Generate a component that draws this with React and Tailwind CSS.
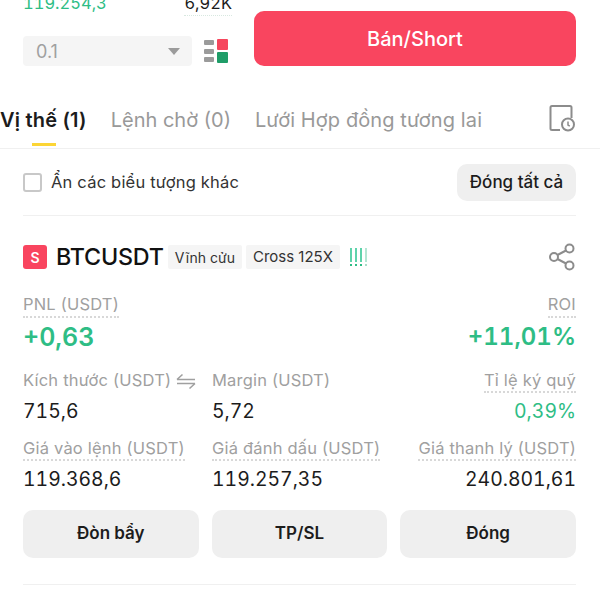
import React from "react";

const Label = ({ children, dotted, className = "" }) => (
  <div
    className={`border-b-2 border-dotted text-[16.5px] leading-[22px] tracking-[0.2px] text-[#a0a0a0] ${
      dotted ? "border-[#d8d8d8]" : "border-transparent"
    } ${className}`}
  >
    {children}
  </div>
);

const Stat = ({ label, value, dotted, right, green, extra, className = "" }) => (
  <div className={`flex flex-col ${right ? "items-end" : "items-start"} ${className}`}>
    <div className="flex items-center gap-[5px]">
      <Label dotted={dotted}>{label}</Label>
      {extra}
    </div>
    <div
      className={`mt-[5px] text-[19.4px] leading-[26px] tabular-nums ${
        green ? "text-[#2ebd85]" : "text-[#1c1c1c]"
      }`}
    >
      {value}
    </div>
  </div>
);

const ActionButton = ({ children }) => (
  <button className="h-[48px] rounded-[10px] bg-[#efefef] text-[17px] font-semibold text-[#1c1c1c]">
    {children}
  </button>
);

const SwapIcon = () => (
  <svg width="20" height="18" viewBox="0 0 20 18" fill="none" stroke="#a0a0a0" strokeWidth="1.6">
    <path d="M1 7.5h18M1 7.5l5.5-5" />
    <path d="M19 11.5H1M19 11.5l-5.5 5" />
  </svg>
);

const OrderBookIcon = () => (
  <div className="ml-[12px] grid w-[24px] grid-cols-[10px_11px] gap-x-[3px]">
    <div className="flex h-[24px] flex-col justify-between py-[1px]">
      <div className="h-[5px] rounded-[1px] bg-[#9b9b9b]"></div>
      <div className="h-[5px] rounded-[1px] bg-[#9b9b9b]"></div>
      <div className="h-[5px] rounded-[1px] bg-[#9b9b9b]"></div>
    </div>
    <div className="flex h-[24px] flex-col justify-between">
      <div className="h-[11px] rounded-[1px] bg-[#f6465d]"></div>
      <div className="h-[11px] rounded-[1px] bg-[#1f9d68]"></div>
    </div>
  </div>
);

const HistoryIcon = () => (
  <svg className="mt-[12px]" width="28" height="28" viewBox="0 0 28 28" fill="none" stroke="#8c8c8c" strokeWidth="2">
    <path d="M12 26H4a1.5 1.5 0 0 1-1.5-1.5V3.5A1.5 1.5 0 0 1 4 2h18a1.5 1.5 0 0 1 1.5 1.5V14" />
    <circle cx="20" cy="20.5" r="6" />
    <path d="M20 17.5v3.5l1.8 1.2" strokeWidth="1.5" />
  </svg>
);

const ShareIcon = () => (
  <svg width="28" height="28" viewBox="0 0 28 28" fill="none" stroke="#8c8c8c" strokeWidth="2">
    <circle cx="6" cy="14" r="4" />
    <circle cx="21.5" cy="5.5" r="4" />
    <circle cx="21.5" cy="22.5" r="4" />
    <path d="M9.5 12l8.5-4.5M9.5 16l8.5 4.5" />
  </svg>
);

const Bang = ({ bar, dot }) => (
  <div className="flex h-[18px] w-[2px] flex-col justify-between">
    <div className={`h-[14px] ${bar}`}></div>
    <div className={`h-[2px] ${dot}`}></div>
  </div>
);

const App = () => {
  return (
    <div className="h-[600px] w-[600px] overflow-hidden bg-white font-['Inter','Liberation_Sans',sans-serif] text-[#1c1c1c]">
      <div className="mt-[-9px] flex pl-[23px] pr-[24px]">
        <div className="w-[231px]">
          <div className="flex w-[209px] justify-between text-[16.5px] leading-[24px] tabular-nums">
            <span className="text-[#2ebd85]">119.254,3</span>
            <span className="border-b border-dotted border-[#d8e8e0] text-[#1c1c1c]">6,92K</span>
          </div>
          <div className="mt-[20px] flex items-center">
            <div className="flex h-[30px] w-[169px] items-center justify-between rounded-[4px] bg-[#f5f5f5] pl-[13px] pr-[12px] text-[18px] text-[#a0a0a0]">
              <span>0.1</span>
              <span className="h-0 w-0 border-x-[6px] border-t-[7px] border-x-transparent border-t-[#9b9b9b]"></span>
            </div>
            <OrderBookIcon />
          </div>
        </div>
        <button className="mt-[20px] h-[55px] flex-1 rounded-[10px] bg-[#f9455f] text-[20px] font-medium text-white">
          Bán/Short
        </button>
      </div>

      <div className="mt-[26px] flex h-[57px] items-start justify-between border-b border-[#f0f0f0] pr-[24px]">
        <div className="flex gap-[24px] pt-[14px] text-[20px] leading-[28px] text-[#999999]">
          <div className="relative font-semibold tracking-[0.2px] text-[#1c1c1c]">
            Vị thế (1)
            <div className="absolute left-[32px] top-[37px] h-[3px] w-[24px] bg-[#fcd535]"></div>
          </div>
          <div>Lệnh chờ (0)</div>
          <div className="tracking-[0.1px]">Lưới Hợp đồng tương lai</div>
        </div>
        <HistoryIcon />
      </div>

      <div className="pl-[23px] pr-[24px]">
        <div className="flex items-center justify-between border-b border-[#f0f0f0] pb-[14px] pt-[15px]">
          <div className="flex items-center gap-[9px]">
            <div className="h-[19px] w-[19px] rounded-[3px] border-2 border-[#c8c8c8]"></div>
            <span className="text-[16.5px] tracking-[0.2px] text-[#333333]">Ẩn các biểu tượng khác</span>
          </div>
          <button className="h-[37px] w-[119px] rounded-[10px] bg-[#efefef] text-[17px] font-medium text-[#1c1c1c]">
            Đóng tất cả
          </button>
        </div>

        <div className="mt-[27px] flex h-[28px] items-center justify-between">
          <div className="flex items-center">
            <div className="flex h-[24px] w-[24px] items-center justify-center rounded-[3px] bg-[#f9455f] text-[14px] font-semibold text-white">
              S
            </div>
            <span className="ml-[9px] text-[23.3px] font-medium tracking-[-0.2px] text-[#111111]">BTCUSDT</span>
            <span className="ml-[4px] flex h-[24px] items-center rounded-[2px] bg-[#f5f5f5] px-[7px] text-[14px] text-[#333333]">
              Vĩnh cửu
            </span>
            <span className="ml-[4px] flex h-[24px] items-center rounded-[2px] bg-[#f5f5f5] px-[7px] text-[15px] text-[#333333]">
              Cross 125X
            </span>
            <div className="ml-[10px] flex gap-[3px]">
              <Bang bar="bg-[#5fd3ab]" dot="bg-[#2ebd85]" />
              <Bang bar="bg-[#5fd3ab]" dot="bg-[#2ebd85]" />
              <Bang bar="bg-[#5fd3ab]" dot="bg-[#2ebd85]" />
              <Bang bar="bg-[#b5e6d3]" dot="bg-[#a9ddc8]" />
            </div>
          </div>
          <ShareIcon />
        </div>

        <div className="mt-[22px] flex justify-between">
          <div className="flex flex-col items-start">
            <Label dotted className="pb-[1px]">PNL (USDT)</Label>
            <div className="mt-[3px] text-[25px] font-semibold leading-[32px] tabular-nums text-[#2ebd85]">+0,63</div>
          </div>
          <div className="flex flex-col items-end">
            <Label dotted className="pb-[1px]">ROI</Label>
            <div className="mt-[3px] text-[24px] font-semibold leading-[32px] tabular-nums text-[#2ebd85]">+11,01%</div>
          </div>
        </div>

        <div className="mt-[16px] grid grid-cols-[189px_1fr_auto]">
          <Stat label="Kích thước (USDT)" value="715,6" extra={<SwapIcon />} />
          <Stat label="Margin (USDT)" value="5,72" />
          <Stat label="Tỉ lệ ký quỹ" value="0,39%" dotted right green />
        </div>

        <div className="mt-[13px] grid grid-cols-[189px_1fr_auto]">
          <Stat label="Giá vào lệnh (USDT)" value="119.368,6" dotted />
          <Stat label="Giá đánh dấu (USDT)" value="119.257,35" dotted />
          <Stat label="Giá thanh lý (USDT)" value="240.801,61" dotted right />
        </div>

        <div className="mt-[18px] grid grid-cols-3 gap-[13px] border-b border-[#f0f0f0] pb-[26px]">
          <ActionButton>Đòn bẩy</ActionButton>
          <ActionButton>TP/SL</ActionButton>
          <ActionButton>Đóng</ActionButton>
        </div>
      </div>
    </div>
  );
};

export default App;
